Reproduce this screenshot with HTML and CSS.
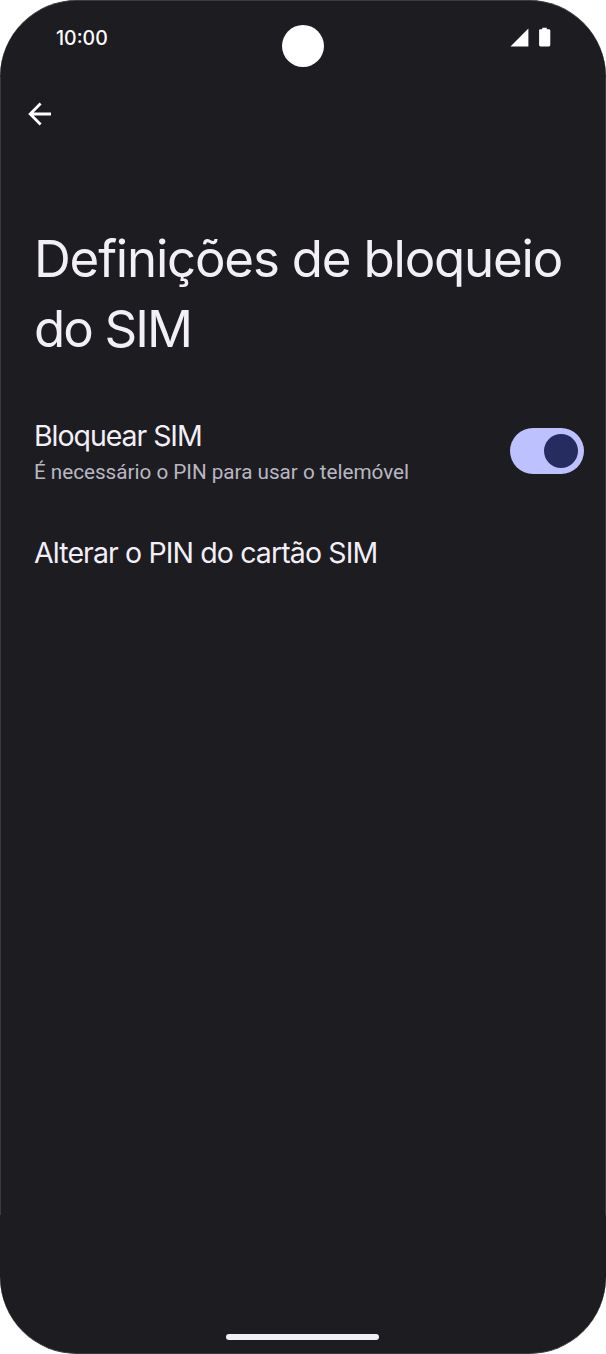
FILE: index.html
```html
<!DOCTYPE html>
<html lang="pt-PT">
<head>
<meta charset="utf-8">
<title>Definições de bloqueio do SIM</title>
<link rel="stylesheet" href="styles.css">
</head>
<body>
<div class="phone">
  <header class="status">
    <span class="time">10:00</span>
    <span class="camera"></span>
    <svg class="status-icons" viewBox="0 0 42 22" width="42" height="22">
      <path fill="#fff" d="M0.5 20.5 18.4 2.6V20.5ZM30 3.2h2.2V1.7h4.6V3.2h2.1q1.4 0 1.4 1.4V19q0 1.4-1.4 1.4H30.5q-1.4 0-1.4-1.4V4.6q0-1.4.9-1.4Z"/>
    </svg>
  </header>
  <nav class="toolbar">
    <svg class="back" viewBox="0 0 24 24" width="24" height="24">
      <path d="M12.6 1.5 2.2 12 12.6 22.5M2.2 12H23" fill="none" stroke="#fff" stroke-width="2.8"/>
    </svg>
  </nav>
  <h1 class="title"><span class="line-one">Definições de bloqueio</span><br><span class="line-two">do SIM</span></h1>
  <main class="settings">
    <section class="row">
      <div class="labels">
        <div class="label lock">Bloquear SIM</div>
        <div class="summary">É necessário o PIN para usar o telemóvel</div>
      </div>
      <span class="switch"><span class="thumb"></span></span>
    </section>
    <section class="row">
      <div class="label change">Alterar o PIN do cartão SIM</div>
    </section>
  </main>
  <div class="home"></div>
</div>
</body>
</html>
```
FILE: styles.css
```css
* { box-sizing: border-box; }
body { margin: 0; background: #fff; font-family: Inter, sans-serif; color: #f2eff7; }
.phone { position: relative; width: 606px; height: 1354px; display: flex; flex-direction: column; background: #1d1c21; border-radius: 77px; overflow: hidden; white-space: nowrap; border-top: 1px solid #3b3a3f; border-bottom: 1px solid #3b3a3f; }
.phone::before, .phone::after { content: ""; position: absolute; top: 76px; width: 1px; height: 1138px; background: #3b3a3f; }
.phone::before { left: 0; }
.phone::after { right: 0; }
.status { height: 72px; display: grid; grid-template-columns: 1fr 42px 1fr; align-items: start; padding: 24px 54px 0 54px; }
.time { padding: 1px 0 0 2px; font-size: 19.5px; font-weight: 500; line-height: 24px; color: #fff; }
.camera { width: 42px; height: 42px; border-radius: 50%; background: #fff; }
.status-icons { justify-self: end; margin-top: 1px; }
.toolbar { height: 151px; padding: 29px 0 0 28px; }
.back { display: block; }
.title { margin: 0; padding-left: 34px; font-size: 51px; font-weight: 400; line-height: 70px; }
.line-one { letter-spacing: -1.2px; }
.line-two { letter-spacing: -1.9px; }
.settings { padding: 54px 22.5px 0 34px; }
.row { display: flex; justify-content: space-between; align-items: flex-start; }
.row + .row { margin-top: 48px; }
.label { font-size: 28.5px; line-height: 36px; width: max-content; }
.lock { letter-spacing: -1.05px; }
.change { letter-spacing: -0.88px; }
.summary { margin-top: 3px; font: 20.7px/30px Roboto, sans-serif; letter-spacing: -0.02px; color: #b9b7c2; width: max-content; }
.switch { width: 74px; height: 46px; margin-top: 10px; padding: 5px 6px; display: flex; justify-content: flex-end; align-items: center; border-radius: 23px; background: #bdc2ff; }
.thumb { width: 34px; height: 34px; border-radius: 50%; background: #262b60; }
.home { width: 153px; height: 6px; margin: auto 0 13px 226px; border-radius: 3px; background: #f2eff7; }
```
